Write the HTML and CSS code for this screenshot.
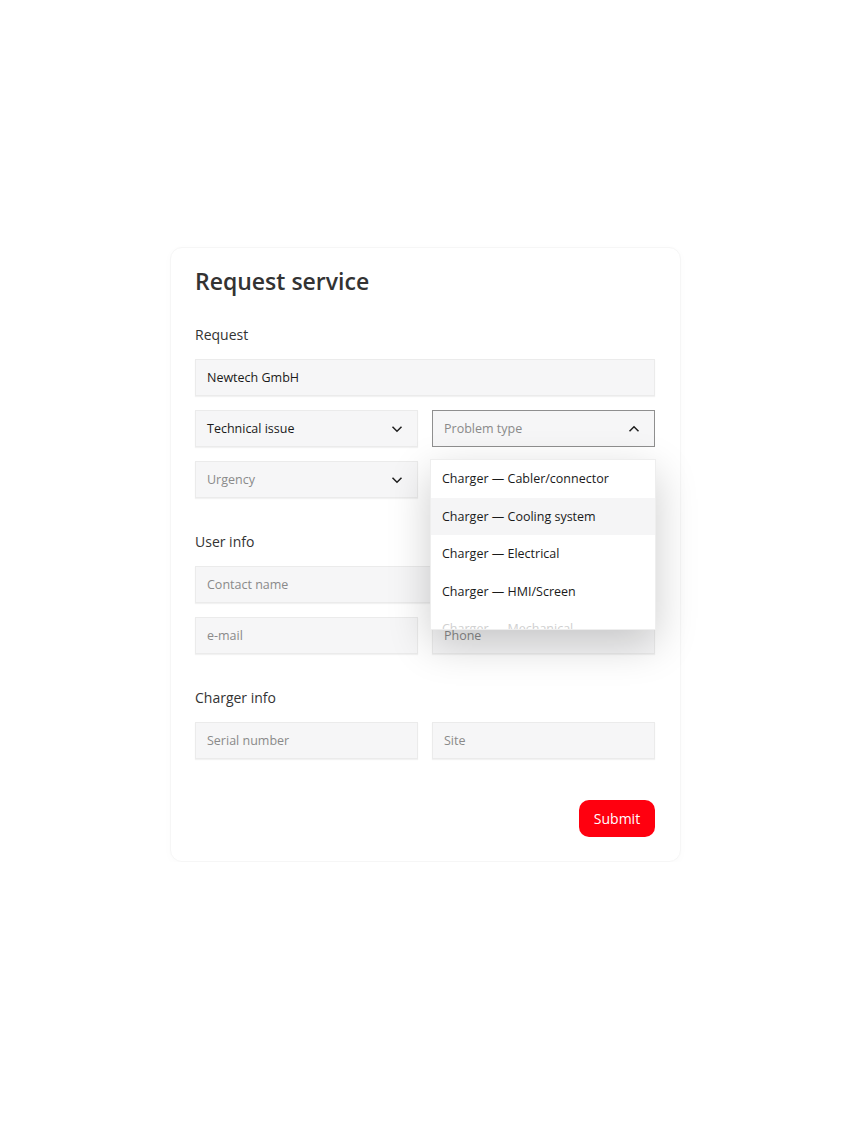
FILE: index.html
```html
<!DOCTYPE html>
<html>
<head>
	<title>Request service</title>
	<meta charset="utf-8">
	<link rel="stylesheet" href="styles.css">
</head>
<body>
<!-- service request card -->
<div class="card">
	<h1 class="title">Request service</h1>

	<div class="section">
		<div class="label">Request</div>
		<div class="grid">
			<div class="field wide value">Newtech GmbH</div>
			<div class="field value select">
				<span>Technical issue</span>
				<svg class="chev" width="12" height="8" viewBox="0 0 12 8"><path d="M1.5 1.8 6 6.2l4.5-4.4" fill="none" stroke="#1f1f1f" stroke-width="1.5"/></svg>
			</div>
			<div class="field select open">
				<span>Problem type</span>
				<svg class="chev" width="12" height="8" viewBox="0 0 12 8"><path d="M1.5 6.2 6 1.8l4.5 4.4" fill="none" stroke="#1f1f1f" stroke-width="1.5"/></svg>
				<ul class="menu">
					<li>Charger — Cabler/connector</li>
					<li class="hover">Charger — Cooling system</li>
					<li>Charger — Electrical</li>
					<li>Charger — HMI/Screen</li>
					<li class="fade">Charger — Mechanical</li>
				</ul>
			</div>
			<div class="field select">
				<span>Urgency</span>
				<svg class="chev" width="12" height="8" viewBox="0 0 12 8"><path d="M1.5 1.8 6 6.2l4.5-4.4" fill="none" stroke="#1f1f1f" stroke-width="1.5"/></svg>
			</div>
		</div>
	</div>

	<div class="section">
		<div class="label">User info</div>
		<div class="grid">
			<div class="field wide">Contact name</div>
			<div class="field">e-mail</div>
			<div class="field">Phone</div>
		</div>
	</div>

	<div class="section">
		<div class="label">Charger info</div>
		<div class="grid">
			<div class="field">Serial number</div>
			<div class="field">Site</div>
		</div>
	</div>

	<div class="actions">
		<button class="submit">Submit</button>
	</div>
</div>
</body>
</html>
```

FILE: styles.css
```css
html,body{
	margin: 0;
	padding: 0;
}

body{
	background-color: #fff;
	font-family: "Open Sans", "Noto Sans", sans-serif;
	color: #1f1f1f;
	padding-top: 247px;
}

.card{
	box-sizing: border-box;
	width: 511px;
	margin-left: 170px;
	padding: 17px 25px 24px 24px;
	background-color: #fff;
	border: 1px solid #f6f6f6;
	border-radius: 12px;
	box-shadow: 0 2px 10px rgba(0,0,0,0.02);
}

.title{
	margin: 0;
	font-size: 23px;
	line-height: 32px;
	font-weight: 600;
	color: #333;
}

.section{
	margin-top: 28px;
}
.section + .section{
	margin-top: 34px;
}

.label{
	font-size: 14px;
	line-height: 20px;
	color: #333;
	margin-bottom: 14px;
}

.grid{
	display: grid;
	grid-template-columns: 1fr 1fr;
	column-gap: 14px;
	row-gap: 14px;
}

.field{
	position: relative;
	box-sizing: border-box;
	height: 37px;
	padding: 0 11px;
	display: flex;
	align-items: center;
	background-color: #f6f6f7;
	border: 1px solid #ebebeb;
	box-shadow: 0 1px 1px rgba(0,0,0,0.05);
	font-size: 12.5px;
	color: #8a8a8a;
}
.field.wide{
	grid-column: 1 / 3;
}
.field.value{
	color: #1a1a1a;
	font-weight: 500;
}
.select{
	justify-content: space-between;
	padding-right: 14px;
}
.select.open{
	border: 1px solid #8f8f8f;
	box-shadow: none;
	z-index: 5;
}

.menu{
	position: absolute;
	top: 48px;
	left: -3px;
	box-sizing: border-box;
	width: 226px;
	height: 171px;
	overflow: hidden;
	margin: 0;
	padding: 0;
	list-style: none;
	background-color: #fff;
	border: 1px solid #eee;
	box-shadow: 0 14px 40px rgba(0,0,0,0.2);
}
.menu li{
	height: 37.5px;
	line-height: 37.5px;
	padding: 0 11px;
	font-size: 12.5px;
	font-weight: 500;
	color: #1a1a1a;
	white-space: nowrap;
}
.menu li.hover{
	background-color: #f5f5f6;
}
.menu li.fade{
	color: #d0d0d0;
}

.actions{
	display: flex;
	justify-content: flex-end;
	margin-top: 41px;
}
.submit{
	width: 76px;
	height: 37px;
	border: none;
	border-radius: 10px;
	background-color: #ff000f;
	color: #fff;
	font-family: "Open Sans", "Noto Sans", sans-serif;
	font-size: 14px;
	font-weight: 500;
}
```
